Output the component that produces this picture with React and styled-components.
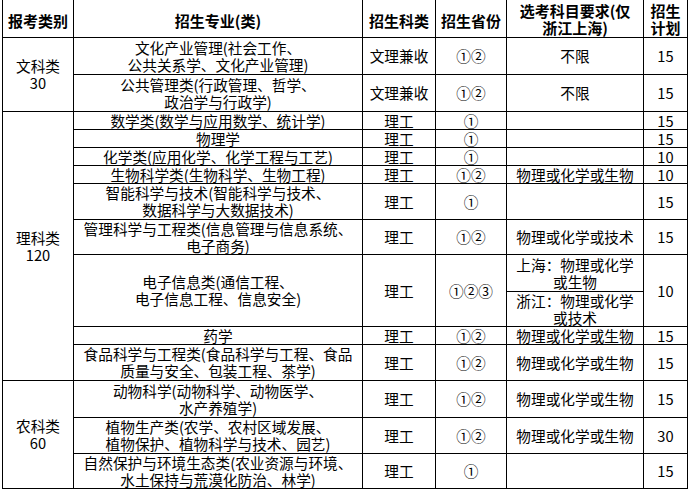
import React from "react";
import styled, { createGlobalStyle } from "styled-components";

const Global = createGlobalStyle`
  html, body { margin: 0; padding: 0; background: #fff; }
  body { font-family: "Noto Sans CJK SC", "Noto Sans", sans-serif; color: #000; }
`;

const Page = styled.div`
  padding-left: 2px;
`;

const Sheet = styled.table`
  border-collapse: collapse;
  table-layout: fixed;
  width: 686px;
  font-size: 14.67px;
`;

const Row = styled.tr`
  height: ${(p) => p.$h}px;
`;

const HeadCell = styled.th`
  border: 1px solid #000;
  border-top: none;
  padding: ${(p) => (p.$two ? "2px 0 0" : "5px 0 0")};
  font-weight: bold;
  font-size: 15px;
  line-height: 17px;
  text-align: center;
  vertical-align: middle;
  white-space: nowrap;
`;

const Cell = styled.td`
  border: 1px solid #000;
  padding: 0;
  line-height: 17px;
  text-align: center;
  vertical-align: middle;
  white-space: nowrap;
`;

const widths = [71, 289, 73, 71, 137, 44];

const lines = (t) =>
  t.split("/").map((s, i, a) => (
    <React.Fragment key={i}>
      {s}
      {i < a.length - 1 && <br />}
    </React.Fragment>
  ));

const groups = [
  {
    cat: "文科类/30",
    rows: [
      { m: "文化产业管理(社会工作、/公共关系学、文化产业管理)", t: "文理兼收", p: "①②", r: "不限", n: "15", h: 37 },
      { m: "公共管理类(行政管理、哲学、/政治学与行政学)", t: "文理兼收", p: "①②", r: "不限", n: "15", h: 37 },
    ],
  },
  {
    cat: "理科类/120",
    rows: [
      { m: "数学类(数学与应用数学、统计学)", t: "理工", p: "①", r: "", n: "15", h: 18 },
      { m: "物理学", t: "理工", p: "①", r: "", n: "15", h: 18 },
      { m: "化学类(应用化学、化学工程与工艺)", t: "理工", p: "①", r: "", n: "10", h: 18 },
      { m: "生物科学类(生物科学、生物工程)", t: "理工", p: "①②", r: "物理或化学或生物", n: "10", h: 18 },
      { m: "智能科学与技术(智能科学与技术、/数据科学与大数据技术)", t: "理工", p: "①", r: "", n: "15", h: 36 },
      { m: "管理科学与工程类(信息管理与信息系统、/电子商务)", t: "理工", p: "①②", r: "物理或化学或技术", n: "15", h: 35 },
      {
        m: "电子信息类(通信工程、/电子信息工程、信息安全)",
        t: "理工",
        p: "①②③",
        split: ["上海：物理或化学/或生物", "浙江：物理或化学/或技术"],
        n: "10",
        h: 37,
        h2: 35,
      },
      { m: "药学", t: "理工", p: "①②", r: "物理或化学或生物", n: "15", h: 18 },
      { m: "食品科学与工程类(食品科学与工程、食品/质量与安全、包装工程、茶学)", t: "理工", p: "①②", r: "物理或化学或生物", n: "15", h: 36 },
    ],
  },
  {
    cat: "农科类/60",
    rows: [
      { m: "动物科学(动物科学、动物医学、/水产养殖学)", t: "理工", p: "①②", r: "物理或化学或生物", n: "15", h: 37 },
      { m: "植物生产类(农学、农村区域发展、/植物保护、植物科学与技术、园艺)", t: "理工", p: "①②", r: "物理或化学或生物", n: "30", h: 36 },
      { m: "自然保护与环境生态类(农业资源与环境、/水土保持与荒漠化防治、林学)", t: "理工", p: "①", r: "", n: "15", h: 35 },
    ],
  },
];

export default function App() {
  const body = [];
  groups.forEach((g, gi) => {
    const span = g.rows.reduce((s, r) => s + (r.split ? 2 : 1), 0);
    g.rows.forEach((r, ri) => {
      const rs = r.split ? 2 : 1;
      body.push(
        <Row key={`${gi}-${ri}`} $h={r.h}>
          {ri === 0 && <Cell rowSpan={span}>{lines(g.cat)}</Cell>}
          <Cell rowSpan={rs}>{lines(r.m)}</Cell>
          <Cell rowSpan={rs}>{r.t}</Cell>
          <Cell rowSpan={rs}>{r.p}</Cell>
          <Cell>{r.split ? lines(r.split[0]) : r.r}</Cell>
          <Cell rowSpan={rs}>{r.n}</Cell>
        </Row>
      );
      if (r.split) {
        body.push(
          <Row key={`${gi}-${ri}-b`} $h={r.h2}>
            <Cell>{lines(r.split[1])}</Cell>
          </Row>
        );
      }
    });
  });

  return (
    <Page>
      <Global />
      <Sheet>
        <colgroup>
          {widths.map((w, i) => (
            <col key={i} style={{ width: w }} />
          ))}
        </colgroup>
        <thead>
          <Row $h={37}>
            <HeadCell>报考类别</HeadCell>
            <HeadCell>招生专业(类)</HeadCell>
            <HeadCell>招生科类</HeadCell>
            <HeadCell>招生省份</HeadCell>
            <HeadCell $two>{lines("选考科目要求(仅/浙江上海)")}</HeadCell>
            <HeadCell $two>{lines("招生/计划")}</HeadCell>
          </Row>
        </thead>
        <tbody>{body}</tbody>
      </Sheet>
    </Page>
  );
}
